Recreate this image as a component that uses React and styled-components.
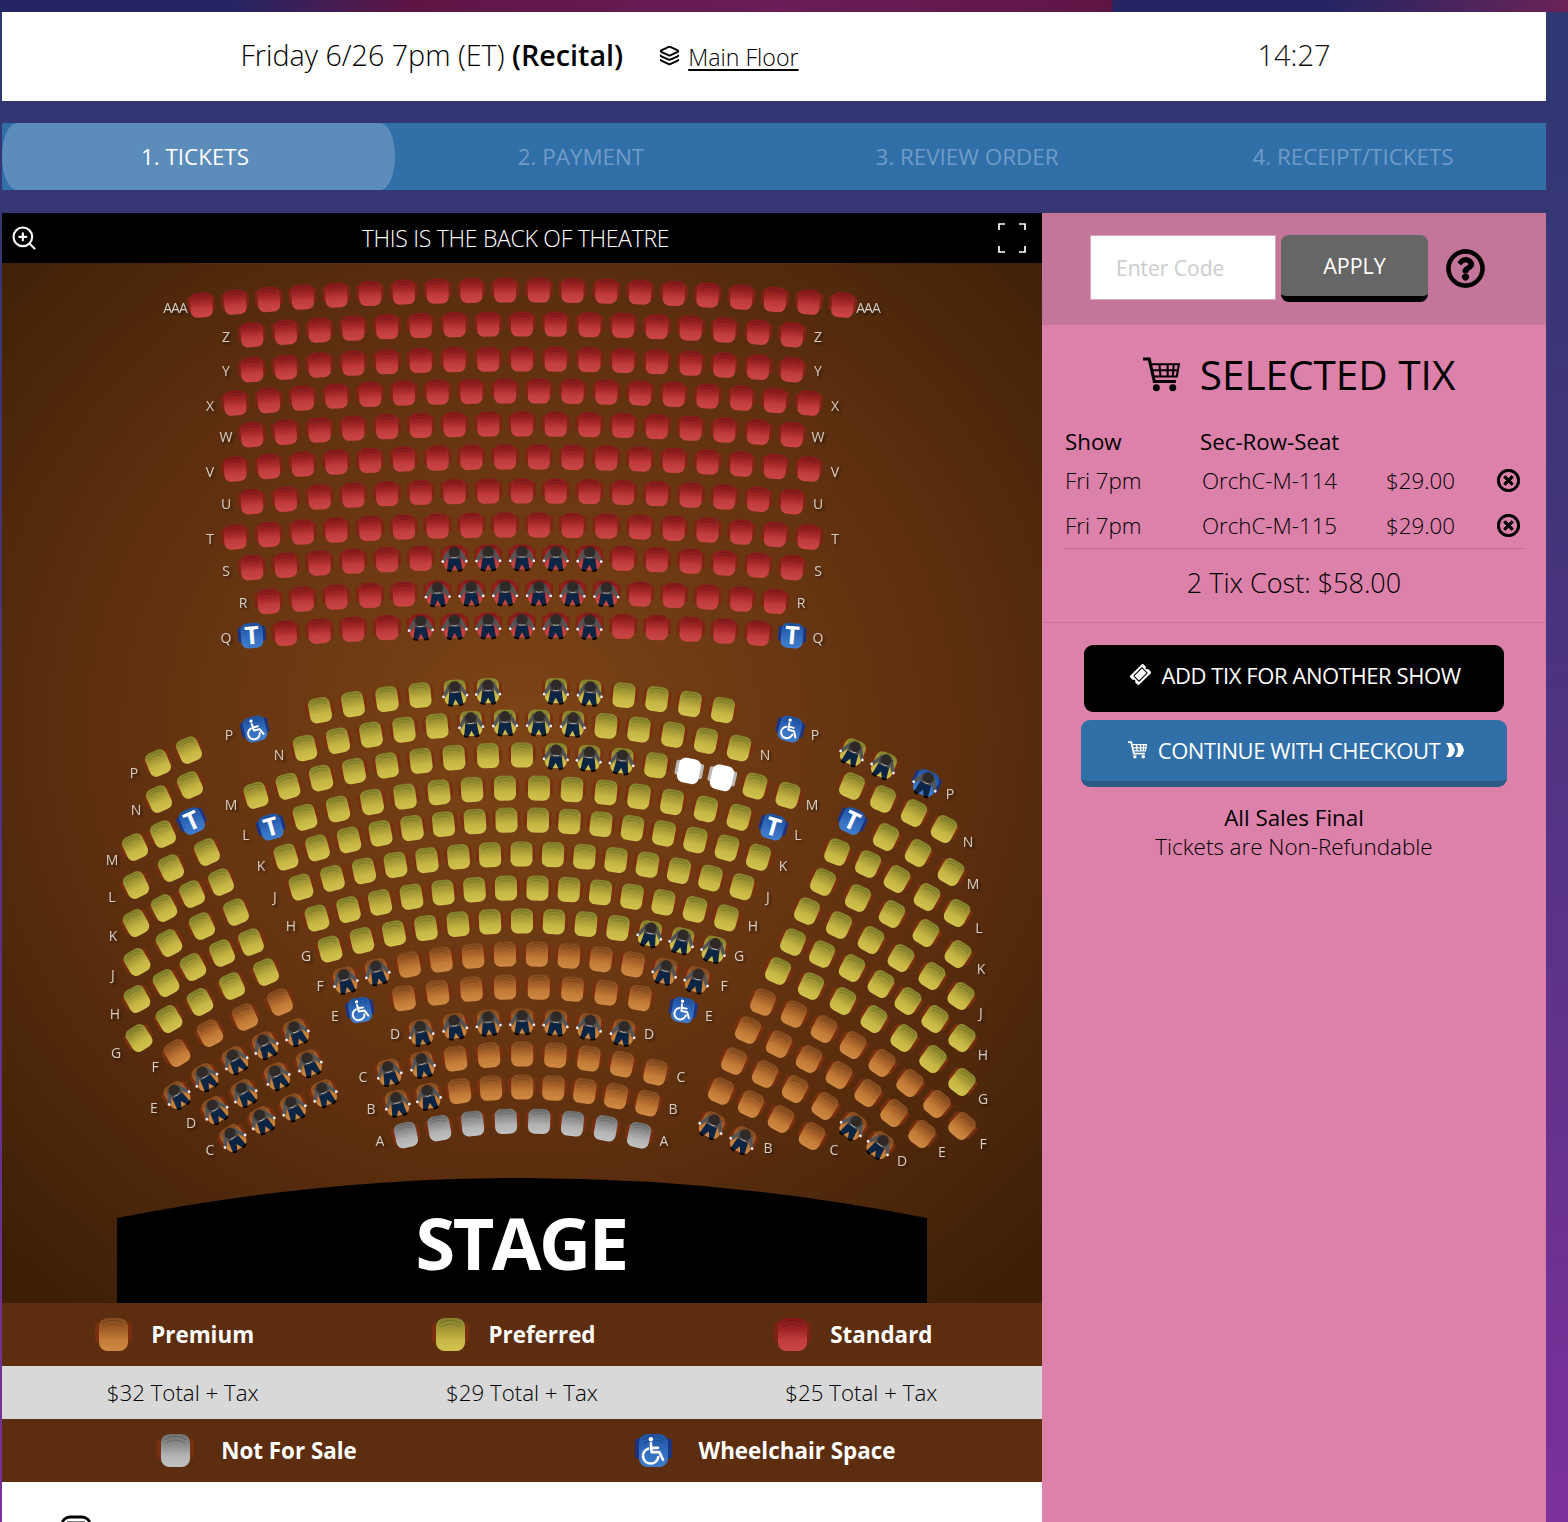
import React from "react";
import styled, { createGlobalStyle } from "styled-components";
import { Layers, ZoomIn } from "lucide-react";
import { FaRegQuestionCircle, FaRegTimesCircle, FaTicketAlt } from "react-icons/fa";

const GlobalStyle = createGlobalStyle`
  html, body {
    margin: 0;
    padding: 0;
    height: 100%;
    overflow: hidden;
    font-family: "Open Sans", "Liberation Sans", sans-serif;
  }
  * { box-sizing: border-box; }
`;

// ---------- Page ----------
const Page = styled.div`
  display: flex;
  flex-direction: column;
  height: 100vh;
  background: linear-gradient(180deg, #2e3872 0%, #44347a 35%, #7d309c 100%);
`;

const TopStrip = styled.div`
  height: 12px;
  flex: none;
  background: linear-gradient(
    90deg,
    #262563 235px,
    #5e1545 410px,
    #6a1d58 780px,
    #5e1545 1112px,
    #262563 1113px,
    #262563 1330px,
    #6a2357 1568px
  );
`;

const Content = styled.div`
  flex: 1;
  min-height: 0;
  display: flex;
  flex-direction: column;
  padding: 0 22px 0 2px;
`;

// ---------- Show bar ----------
const ShowBar = styled.div`
  display: grid;
  grid-template-columns: 1040px 504px;
  height: 89px;
  background: #fff;
  color: #111;
`;

const ShowInfo = styled.div`
  display: flex;
  align-items: center;
  justify-content: center;
  padding-bottom: 4px;
  padding-right: 5px;
`;

const ShowTitle = styled.span`
  font-size: 28.7px;
  font-weight: 300;
  color: #000;
  b { font-weight: 600; }
`;

const FloorLink = styled.span`
  display: inline-flex;
  align-items: center;
  gap: 8px;
  margin-left: 36px;
  font-size: 23.2px;
  font-weight: 300;
  color: #000;
  padding-top: 4px;
  u { text-underline-offset: 3px; }
  svg { margin-top: -2px; }
`;

const Timer = styled.div`
  display: flex;
  align-items: center;
  justify-content: center;
  font-size: 29px;
  font-weight: 300;
  padding-bottom: 4px;
`;

// ---------- Steps ----------
const Steps = styled.div`
  display: grid;
  grid-template-columns: repeat(4, 1fr);
  height: 67px;
  margin-top: 22px;
  background: #316fa9;
  flex: none;
`;

const Step = styled.div`
  display: flex;
  align-items: center;
  justify-content: center;
  padding-bottom: 1px;
  padding-right: ${({ $active }) => ($active ? "7px" : "0")};
  font-size: 22.4px;
  color: ${({ $active }) => ($active ? "#fff" : "#6f9bc8")};
  background: ${({ $active }) => ($active ? "#5b8cba" : "transparent")};
  border-radius: ${({ $active }) => ($active ? "15px / 50%" : "0")};
  margin-right: ${({ $active }) => ($active ? "-7px" : "0")};
`;

// ---------- Main ----------
const Main = styled.div`
  flex: 1;
  min-height: 0;
  display: grid;
  grid-template-columns: 1040px 504px;
  margin-top: 23px;
`;

const ChartColumn = styled.div`
  display: flex;
  flex-direction: column;
  min-height: 0;
  overflow: hidden;
`;

const ChartHeader = styled.div`
  display: flex;
  align-items: center;
  justify-content: space-between;
  height: 50px;
  flex: none;
  padding: 0 15px 0 8px;
  background: #000;
  color: #fff;
`;

const ChartTitle = styled.span`
  font-size: 23px;
  font-weight: 300;
  letter-spacing: -0.28px;
  margin-left: -4px;
`;

const SeatMap = styled.svg`
  display: block;
  width: 1040px;
  height: 1040px;
  flex: none;
  background: radial-gradient(ellipse 72% 70% at 50% 45%, #7d4416 0%, #5f300f 55%, #3d1f06 100%);
`;

const LabelLayer = styled.g`
  fill: #d6cdc4;
  font-family: "Open Sans", sans-serif;
  font-size: 14px;
  text-anchor: middle;
  filter: drop-shadow(2px 2px 1px rgba(0, 0, 0, 0.45));
`;

const StageText = styled.text`
  fill: #fff;
  font-family: "Open Sans", sans-serif;
  font-size: 72px;
  font-weight: 700;
  text-anchor: middle;
  letter-spacing: -2.5px;
`;

const LegendRow = styled.div`
  display: grid;
  grid-template-columns: ${({ $cols }) => `repeat(${$cols}, 1fr)`};
  align-items: center;
  height: 63px;
  flex: none;
  padding: ${({ $cols }) => ($cols === 3 ? "0 12px 0 10px" : "0 23px 0 1px")};
  background: #5c2d0e;
`;

const LegendItem = styled.div`
  display: flex;
  align-items: center;
  justify-content: center;
  gap: ${({ $wide }) => ($wide ? "27px" : "19px")};
  padding-right: ${({ $wide }) => ($wide ? "0" : "14px")};
  color: #fff;
  font-size: 22.4px;
  font-weight: 700;
`;

const PriceRow = styled.div`
  display: grid;
  grid-template-columns: repeat(3, 1fr);
  align-items: center;
  height: 53px;
  flex: none;
  padding: 0 11px;
  background: #d8d8d8;
`;

const Price = styled.div`
  text-align: center;
  font-size: 22.3px;
  font-weight: 300;
  color: #000;
`;

const LegendSeat = styled.svg`
  width: 37px;
  height: 33px;
  flex: none;
`;

const ChartFooter = styled.div`
  flex: 1;
  background: #fff;
  padding: 33px 0 0 58px;
  overflow: hidden;
`;

// ---------- Sidebar ----------
const Sidebar = styled.aside`
  display: flex;
  flex-direction: column;
  background: #dc81aa;
  color: #000;
`;

const CouponBar = styled.div`
  display: flex;
  align-items: flex-start;
  height: 112px;
  flex: none;
  padding: 22px 0 0 48px;
  background: #c4769a;
`;

const CodeInput = styled.input`
  width: 186px;
  height: 65px;
  padding: 0 25px;
  border: 1px solid #d9a3bd;
  background: #fff;
  font-family: inherit;
  font-size: 21px;
  outline: none;
  &::placeholder { color: #ccc; opacity: 1; }
`;

const ApplyButton = styled.button`
  width: 147px;
  height: 67px;
  margin-left: 5px;
  padding: 0;
  border: 0;
  border-bottom: 6px solid #000;
  border-radius: 8px;
  background: #666;
  color: #fff;
  font-family: inherit;
  font-size: 21.5px;
`;

const HelpIcon = styled.span`
  display: flex;
  margin: 14px 0 0 18px;
  font-size: 39px;
  svg { stroke: currentColor; stroke-width: 12; }
`;

const SelectedTitle = styled.h2`
  display: flex;
  align-items: center;
  justify-content: center;
  gap: 20px;
  margin: 22px 0 0;
  padding-left: 10px;
  font-size: 40.5px;
  line-height: 55px;
  font-weight: 400;
`;

const TixTable = styled.div`
  display: grid;
  grid-template-columns: 135px 186px 111px 1fr;
  align-items: center;
  margin: 21px 22px 0 22px;
  padding: 0 0 0 1px;
  border-bottom: 1px solid #c4698f;
  font-size: 22.3px;
`;

const HeadCell = styled.div`
  height: 35px;
  line-height: 37px;
`;

const TixCell = styled.div`
  height: 45px;
  line-height: 45px;
  font-weight: 300;
  padding-left: ${({ $inset }) => ($inset ? "2px" : "0")};
`;

const RemoveCell = styled.div`
  display: flex;
  align-items: center;
  height: 45px;
  font-size: 23px;
  svg { stroke: currentColor; stroke-width: 22; }
`;

const TotalCost = styled.div`
  height: 74px;
  padding-top: 15px;
  text-align: center;
  font-size: 27px;
  font-weight: 300;
  border-bottom: 1px solid #c9729a;
`;

const ActionButton = styled.button`
  display: flex;
  align-items: center;
  justify-content: center;
  gap: 11px;
  width: ${({ $primary }) => ($primary ? "426px" : "420px")};
  height: 67px;
  margin: ${({ $primary }) => ($primary ? "8px 0 0 39px" : "22px 0 0 42px")};
  padding: ${({ $primary }) => ($primary ? "0 0 1px 4px" : "0 0 8px 4px")};
  border: 0;
  border-bottom: ${({ $primary }) => ($primary ? "6px solid #2a5a85" : "0")};
  border-radius: 9px;
  background: ${({ $primary }) => ($primary ? "#316fa9" : "#000")};
  color: #fff;
  font-family: inherit;
  font-size: 22px;
  letter-spacing: -0.42px;
`;

const TicketGlyph = styled(FaTicketAlt)`
  font-size: 19px;
  transform: rotate(-45deg);
`;

const SalesNote = styled.div`
  margin-top: 16px;
  text-align: center;
  font-size: 22.4px;
  line-height: 29px;
  span { display: block; font-weight: 300; }
`;

const ChevronSlot = styled.span`
  display: flex;
  margin-left: -5px;
`;

// ---------- Drawn icons ----------
const CartIcon = ({ size, weight = 2 }) => (
  <svg width={size} height={size * 0.94} viewBox="0 0 36 34" fill="none" stroke="currentColor" strokeWidth={weight}>
    <path d="M0 2H6L11 24H32" strokeWidth={weight + 1} />
    <path d="M8 7H35L33 19H10.5M9 13H34M16 7L17 19M24 7V19M30 7L29 19" />
    <circle cx="13" cy="30" r="3.4" fill="currentColor" stroke="none" />
    <circle cx="29" cy="30" r="3.4" fill="currentColor" stroke="none" />
  </svg>
);

const DoubleChevron = () => (
  <svg width="18" height="16" viewBox="0 0 18 16" fill="currentColor">
    <path d="M0 1H5Q8.5 4 9 8Q8.5 12 5 15H0Q3 12 3 8Q3 4 0 1Z" />
    <path d="M9 1H14Q17.5 4 18 8Q17.5 12 14 15H9Q12 12 12 8Q12 4 9 1Z" />
  </svg>
);

const CornersIcon = () => (
  <svg width="30" height="30" viewBox="0 0 30 30" fill="none" stroke="#fff" strokeWidth="1.7">
    <path d="M2 7V1H8M22 1H28V7M2 23V29H8M22 29H28V23" />
  </svg>
);

// ---------- Seat map data ----------
const CENTER_X = 522;

const seq = (start, step, count) => Array.from({ length: count }, (_, i) => start + step * i);

// arc of a row: base y at the middle, `drop` px lower at `reach` px out
const arc = (xs, base, drop, reach) =>
  xs.map((x) => [x, base + drop * ((x - CENTER_X) / reach) ** 2]);

const balcony = (count, base) =>
  arc(seq(CENTER_X - ((count - 1) * 33.76) / 2, 33.76, count), base, 15, 321);

const seatRows = [
  // balcony
  { color: "red", pts: balcony(20, 290) },
  { color: "red", pts: balcony(17, 324) },
  { color: "red", pts: balcony(17, 359) },
  { color: "red", pts: balcony(18, 391) },
  { color: "red", pts: balcony(17, 424) },
  { color: "red", pts: balcony(18, 457) },
  { color: "red", pts: balcony(17, 491) },
  { color: "red", pts: balcony(18, 525) },
  { color: "red", pts: balcony(17, 557), people: [6, 7, 8, 9, 10] },
  { color: "red", pts: balcony(16, 592), people: [5, 6, 7, 8, 9, 10] },
  { color: "red", pts: balcony(17, 625), people: [5, 6, 7, 8, 9, 10], transfer: [0, 16] },
  // orchestra centre
  {
    color: "yellow",
    pts: arc([320, 353, 387, 420, 455, 488, 556, 590, 624, 657, 690, 723], 690, 20, 201),
    people: [4, 5, 6, 7],
  },
  {
    color: "yellow",
    pts: arc([305, 338, 371, 404, 437, 471, 505, 539, 573, 606, 639, 673, 706, 739], 722, 26, 217),
    people: [5, 6, 7, 8],
  },
  {
    color: "yellow",
    pts: arc([256, 288, 321, 354, 387, 421, 454, 488, 522, 556, 589, 622, 656, 689, 722, 755, 788], 755, 40, 265),
    people: [9, 10, 11],
    held: [13, 14],
  },
  {
    color: "yellow",
    pts: arc([271, 305, 338, 372, 405, 439, 472, 505, 539, 572, 606, 639, 672, 706, 739, 773], 788, 39, 251),
    transfer: [0, 15],
  },
  { color: "yellow", pts: arc(seq(286, 31.5, 16), 820, 37, 236) },
  { color: "yellow", pts: arc(seq(301, 31.5, 15), 854, 33, 221) },
  { color: "yellow", pts: arc(seq(317, 31.5, 14), 888, 30, 205) },
  { color: "yellow", pts: arc(seq(330, 32, 13), 921, 28, 192), people: [10, 11, 12] },
  { color: "orange", pts: arc(seq(345, 32, 12), 954, 26, 177), people: [0, 1, 10, 11] },
  { color: "orange", pts: arc(seq(404, 33.7, 8), 987, 11, 118) },
  { color: "orange", pts: arc(seq(421, 33.7, 7), 1021, 11, 101), people: [0, 1, 2, 3, 4, 5, 6] },
  { color: "orange", pts: arc(seq(389, 33.3, 9), 1054, 18, 133), people: [0, 1] },
  { color: "orange", pts: arc(seq(397, 31.3, 9), 1087, 16, 125), people: [0, 1] },
  { color: "grey", pts: arc(seq(406, 33.3, 8), 1121, 14, 116) },
  // wheelchair spaces
  { color: "wheel", pts: [[255, 729]], rot: -14 },
  { color: "wheel", pts: [[790, 729]], rot: 14 },
  { color: "wheel", pts: [[360, 1010]], rot: -10 },
  { color: "wheel", pts: [[683, 1010]], rot: 10 },
  // orchestra left
  { color: "yellow", pts: [[158, 763], [189, 750]] },
  { color: "yellow", pts: [[159, 799], [190, 785]] },
  { color: "yellow", pts: [[135, 847], [163, 834], [192, 821]], transfer: [2] },
  { color: "yellow", pts: [[136, 885], [171, 868], [207, 852]] },
  { color: "yellow", pts: [[136, 923], [164, 908], [192, 894], [221, 882]] },
  { color: "yellow", pts: [[137, 962], [169, 943], [202, 926], [236, 912]] },
  { color: "yellow", pts: [[137, 999], [166, 983], [193, 967], [222, 953], [251, 942]] },
  { color: "yellow", pts: [[139, 1038], [169, 1019], [200, 1002], [232, 986], [266, 972]] },
  { color: "orange", pts: [[177, 1053], [210, 1033], [245, 1017], [280, 1002]] },
  { color: "orange", pts: [[177, 1095], [205, 1077], [235, 1060], [265, 1045], [296, 1032]], people: [0, 1, 2, 3, 4] },
  { color: "orange", pts: [[215, 1110], [244, 1093], [277, 1076], [309, 1063]], people: [0, 1, 2, 3] },
  { color: "orange", pts: [[233, 1138], [262, 1120], [293, 1107], [324, 1093]], people: [0, 1, 2, 3] },
  // orchestra right
  { color: "yellow", pts: [[853, 752], [884, 765]], people: [0, 1] },
  { color: "wheel", pts: [[926, 783]], rot: 24, people: [0] },
  { color: "yellow", pts: [[852, 786], [883, 799], [914, 813], [944, 829]] },
  { color: "yellow", pts: [[852, 821], [886, 837], [918, 853], [951, 872]], transfer: [0] },
  { color: "yellow", pts: [[837, 852], [868, 864], [897, 879], [927, 897], [957, 913]] },
  { color: "yellow", pts: [[823, 882], [858, 898], [892, 914], [926, 933], [958, 954]] },
  { color: "yellow", pts: [[807, 911], [839, 925], [871, 940], [901, 958], [932, 976], [961, 996]] },
  { color: "yellow", pts: [[793, 942], [822, 954], [852, 968], [881, 984], [908, 1001], [935, 1019], [962, 1038]] },
  { color: "yellow", pts: [[778, 971], [811, 986], [843, 1001], [874, 1019], [904, 1038], [933, 1059], [962, 1082]] },
  { color: "orange", pts: [[763, 1002], [794, 1014], [824, 1029], [853, 1045], [882, 1063], [910, 1083], [937, 1104], [962, 1126]] },
  { color: "orange", pts: [[748, 1030], [779, 1044], [809, 1059], [839, 1075], [868, 1093], [894, 1113], [922, 1134]] },
  { color: "orange", pts: [[734, 1061], [765, 1074], [795, 1089], [825, 1106], [853, 1126], [880, 1145]], people: [4, 5] },
  { color: "orange", pts: [[721, 1091], [751, 1104], [781, 1119], [812, 1136]] },
  { color: "orange", pts: [[712, 1125], [743, 1140]], people: [0, 1] },
];

const rowLabels = [
  ["AAA", 175, 313], ["AAA", 868, 313], ["Z", 226, 342], ["Z", 818, 342], ["Y", 226, 376], ["Y", 818, 376],
  ["X", 210, 411], ["X", 835, 411], ["W", 226, 442], ["W", 818, 442], ["V", 210, 477], ["V", 835, 477],
  ["U", 226, 509], ["U", 818, 509], ["T", 210, 544], ["T", 835, 544], ["S", 226, 576], ["S", 818, 576],
  ["R", 243, 608], ["R", 801, 608], ["Q", 226, 643], ["Q", 818, 643],
  ["P", 229, 740], ["P", 815, 740], ["N", 279, 760], ["N", 765, 760], ["M", 231, 810], ["M", 812, 810],
  ["L", 246, 840], ["L", 798, 840], ["K", 261, 871], ["K", 783, 871], ["J", 275, 902], ["J", 768, 902],
  ["H", 291, 931], ["H", 753, 931], ["G", 306, 961], ["G", 739, 961], ["F", 320, 991], ["F", 724, 991],
  ["E", 335, 1021], ["E", 709, 1021], ["D", 395, 1039], ["D", 649, 1039], ["C", 363, 1082], ["C", 681, 1082],
  ["B", 371, 1114], ["B", 673, 1114], ["A", 380, 1146], ["A", 664, 1146],
  ["P", 134, 778], ["N", 136, 815], ["M", 112, 865], ["L", 112, 902], ["K", 113, 941], ["J", 113, 980],
  ["H", 115, 1019], ["G", 116, 1058], ["F", 155, 1072], ["E", 154, 1113], ["D", 191, 1128], ["C", 210, 1155],
  ["P", 950, 799], ["N", 968, 847], ["M", 973, 889], ["L", 979, 933], ["K", 981, 974], ["J", 981, 1018],
  ["H", 983, 1060], ["G", 983, 1104], ["F", 983, 1149], ["E", 942, 1157], ["D", 902, 1166], ["C", 834, 1155],
  ["B", 768, 1153],
];

const gradients = {
  red: ["#841919", "#a02424", "#c03c3c", "#cc4646"],
  yellow: ["#85822c", "#a49834", "#c6b644", "#d2c24e"],
  orange: ["#854a1e", "#a25f28", "#c37b36", "#cf8a44"],
  grey: ["#6f6f6f", "#909090", "#b2b2b2", "#c2c2c2"],
  white: ["#fff", "#fff", "#fff", "#fff"],
  wheel: ["#1f55a6", "#2a62b4", "#3671c2", "#3f7dcc"],
};

const armColors = {
  red: "#7f2414",
  yellow: "#7b2f10",
  orange: "#7b2f10",
  grey: "#7b3012",
  white: "#c4c4c4",
  wheel: "#17348c",
};

const SeatBase = ({ color }) => (
  <>
    <rect x="-14" y="-9" width="28" height="15" rx="2" fill={armColors[color]} opacity="0.9" />
    <rect x="-11" y="-12.5" width="22" height="25" rx="6.5" fill={`url(#seat-${color})`} />
    {color !== "white" && (
      <path d="M-8.5 -8Q0 -13.5 8.5 -8M-7.5 -5.5Q0 -10.5 7.5 -5.5" fill="none" stroke="#000" strokeOpacity="0.18" strokeWidth="0.8" />
    )}
  </>
);

const Person = () => (
  <g>
    <path d="M-5.5 -6L-11 3M5.5 -6L11 3" stroke="#555" strokeWidth="3.6" strokeLinecap="round" />
    <path d="M-7 -8H7L5.8 3H-5.8Z" fill="#4c4c4c" />
    <path d="M-5.8 1H5.8L7.5 11.5L3 13L0 7L-3 13L-7.5 11.5Z" fill="#0c2545" />
    <path d="M-7.6 11.2L-3 12.8L-3.6 14.4L-7.8 13.2ZM7.6 11.2L3 12.8L3.6 14.4L7.8 13.2Z" fill="#000" />
    <circle cx="-11.8" cy="3.8" r="1.4" fill="#eee" />
    <circle cx="11.8" cy="3.8" r="1.4" fill="#eee" />
    <circle cx="0" cy="-5.5" r="5.6" fill="#2f2a27" />
    <path d="M-2.8 -0.4Q0 0.8 2.8 -0.4" fill="none" stroke="#ddd" strokeWidth="0.7" />
  </g>
);

const WheelGlyph = () => (
  <g fill="none" stroke="#fff" strokeWidth="2" strokeLinecap="round" strokeLinejoin="round">
    <circle cx="-2" cy="-8.6" r="1.7" fill="#fff" stroke="none" />
    <path d="M-2 -5.5L-1.4 1.2H4.4L7.2 7" />
    <path d="M-1.8 -2H3.4" />
    <path d="M-4 -1.4A5.8 5.8 0 1 0 3.6 5" />
  </g>
);

const SeatDefs = () => (
  <defs>
    {Object.entries(gradients).map(([name, stops]) => (
      <linearGradient key={name} id={`seat-${name}`} x1="0" y1="0" x2="0" y2="1">
        <stop offset="0" stopColor={stops[0]} />
        <stop offset="0.35" stopColor={stops[1]} />
        <stop offset="0.65" stopColor={stops[2]} />
        <stop offset="1" stopColor={stops[3]} />
      </linearGradient>
    ))}
    {Object.keys(gradients).map((name) => (
      <g key={name} id={`chair-${name}`}>
        <SeatBase color={name} />
      </g>
    ))}
    <g id="chair-person">
      <Person />
    </g>
    <g id="chair-wheel-mark">
      <WheelGlyph />
    </g>
    <g id="chair-transfer">
      <text y="8.5" textAnchor="middle" fontFamily="Open Sans, sans-serif" fontSize="25" fontWeight="700" fill="#fff">
        T
      </text>
    </g>
  </defs>
);

// lean of a seat follows the line through its neighbours in the row
const leanOf = (pts, i) => {
  const prev = pts[Math.max(i - 1, 0)];
  const next = pts[Math.min(i + 1, pts.length - 1)];
  return (Math.atan2(next[1] - prev[1], next[0] - prev[0]) * 180) / Math.PI;
};

const SeatRow = ({ row }) =>
  row.pts.map(([x, y], i) => {
    const lean = row.rot ?? leanOf(row.pts, i);
    const isTransfer = row.transfer?.includes(i);
    const isHeld = row.held?.includes(i);
    const base = isTransfer ? "wheel" : isHeld ? "white" : row.color;
    const hasPerson = row.people?.includes(i);
    const at = `translate(${x} ${y}) rotate(${lean.toFixed(1)})`;
    return (
      <g key={i} transform={at}>
        <use href={`#chair-${base}`} />
        {isTransfer && <use href="#chair-transfer" />}
        {row.color === "wheel" && !hasPerson && <use href="#chair-wheel-mark" />}
        {hasPerson && <use href="#chair-person" />}
      </g>
    );
  });

const Chair = ({ color, mark }) => (
  <LegendSeat viewBox="-14 -12.5 28 25">
    <use href={`#chair-${color}`} />
    {mark && <use href="#chair-wheel-mark" />}
  </LegendSeat>
);

const tiers = [
  { name: "Premium", color: "orange", price: "$32 Total + Tax" },
  { name: "Preferred", color: "yellow", price: "$29 Total + Tax" },
  { name: "Standard", color: "red", price: "$25 Total + Tax" },
];

const tickets = ["OrchC-M-114", "OrchC-M-115"];

const steps = ["1. TICKETS", "2. PAYMENT", "3. REVIEW ORDER", "4. RECEIPT/TICKETS"];

export default function App() {
  return (
    <Page>
      <GlobalStyle />
      <TopStrip />
      <Content>
        <ShowBar>
          <ShowInfo>
            <ShowTitle>
              Friday 6/26 7pm (ET) <b>(Recital)</b>
            </ShowTitle>
            <FloorLink>
              <Layers size={21} strokeWidth={2.2} />
              <u>Main Floor</u>
            </FloorLink>
          </ShowInfo>
          <Timer>14:27</Timer>
        </ShowBar>

        <Steps>
          {steps.map((step, index) => (
            <Step key={step} $active={index === 0}>
              {step}
            </Step>
          ))}
        </Steps>

        <Main>
          <ChartColumn>
            <ChartHeader>
              <ZoomIn size={28} color="#fff" strokeWidth={1.8} />
              <ChartTitle>THIS IS THE BACK OF THEATRE</ChartTitle>
              <CornersIcon />
            </ChartHeader>

            <SeatMap viewBox="2 263 1040 1040">
              <SeatDefs />
              {seatRows.map((row, index) => (
                <SeatRow key={index} row={row} />
              ))}
              <LabelLayer>
                {rowLabels.map(([text, x, y], index) => (
                  <text key={index} x={x} y={y} letterSpacing={text === "AAA" ? -1 : 0}>
                    {text}
                  </text>
                ))}
              </LabelLayer>
              <path d="M117 1303V1218Q522 1138 927 1218V1303Z" fill="#000" />
              <StageText x="521" y="1270">
                STAGE
              </StageText>
            </SeatMap>

            <LegendRow $cols={3}>
              {tiers.map((tier) => (
                <LegendItem key={tier.name}>
                  <Chair color={tier.color} />
                  {tier.name}
                </LegendItem>
              ))}
            </LegendRow>
            <PriceRow>
              {tiers.map((tier) => (
                <Price key={tier.name}>{tier.price}</Price>
              ))}
            </PriceRow>
            <LegendRow $cols={2}>
              <LegendItem $wide>
                <Chair color="grey" />
                Not For Sale
              </LegendItem>
              <LegendItem $wide>
                <Chair color="wheel" mark />
                Wheelchair Space
              </LegendItem>
            </LegendRow>

            <ChartFooter>
              <svg width="32" height="32" viewBox="0 0 32 32" fill="none" stroke="#000" strokeWidth="2.8">
                <rect x="2" y="2" width="28" height="26" rx="8" />
                <path d="M7 8H25M7 13H25" />
              </svg>
            </ChartFooter>
          </ChartColumn>

          <Sidebar>
            <CouponBar>
              <CodeInput placeholder="Enter Code" readOnly />
              <ApplyButton>APPLY</ApplyButton>
              <HelpIcon>
                <FaRegQuestionCircle />
              </HelpIcon>
            </CouponBar>

            <SelectedTitle>
              <CartIcon size={37} />
              SELECTED TIX
            </SelectedTitle>

            <TixTable>
              <HeadCell>Show</HeadCell>
              <HeadCell>Sec-Row-Seat</HeadCell>
              <HeadCell />
              <HeadCell />
              {tickets.map((seat) => (
                <React.Fragment key={seat}>
                  <TixCell>Fri 7pm</TixCell>
                  <TixCell $inset>{seat}</TixCell>
                  <TixCell>$29.00</TixCell>
                  <RemoveCell>
                    <FaRegTimesCircle />
                  </RemoveCell>
                </React.Fragment>
              ))}
            </TixTable>

            <TotalCost>2 Tix Cost: $58.00</TotalCost>

            <ActionButton>
              <TicketGlyph />
              ADD TIX FOR ANOTHER SHOW
            </ActionButton>
            <ActionButton $primary>
              <CartIcon size={19} weight={2.4} />
              CONTINUE WITH CHECKOUT
              <ChevronSlot>
                <DoubleChevron />
              </ChevronSlot>
            </ActionButton>

            <SalesNote>
              All Sales Final
              <span>Tickets are Non-Refundable</span>
            </SalesNote>
          </Sidebar>
        </Main>
      </Content>
    </Page>
  );
}
